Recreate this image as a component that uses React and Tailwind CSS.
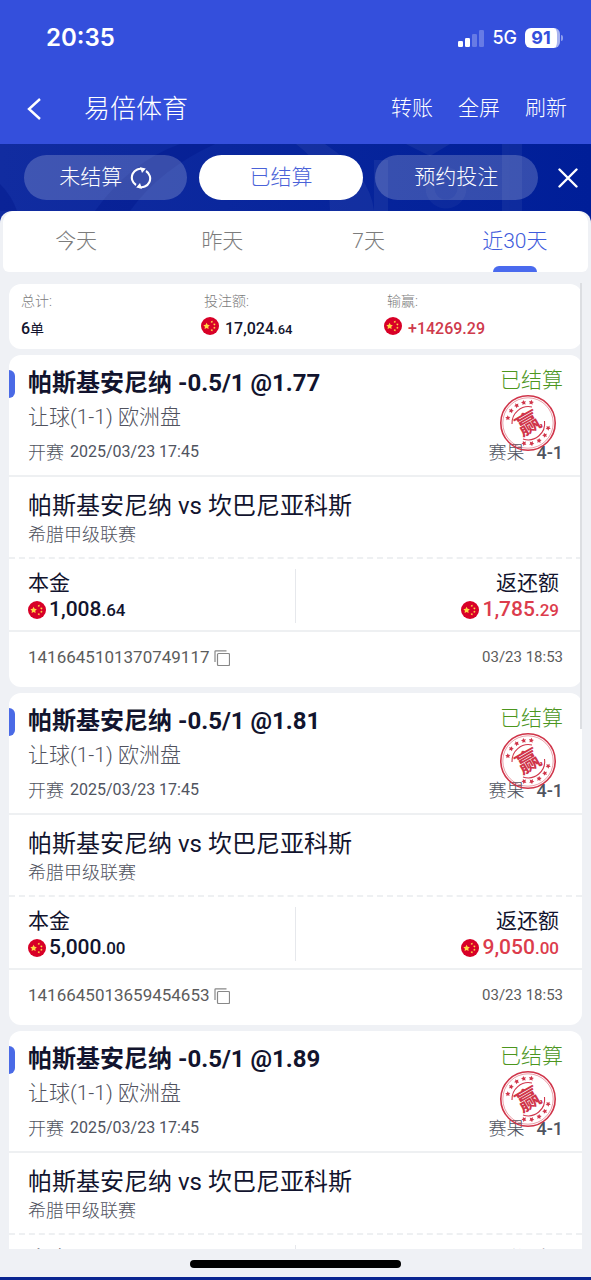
import React, { useState } from 'react';
import clsx from 'clsx';

const bets = [
  { id: '1416645101370749117', odds: '1.77', stake: ['1,008', '.64'], payout: ['1,785', '.29'] },
  { id: '1416645013659454653', odds: '1.81', stake: ['5,000', '.00'], payout: ['9,050', '.00'] },
  { id: '1416645013659454654', odds: '1.89', stake: ['5,000', '.00'], payout: ['9,450', '.00'] },
];

const ranges = ['今天', '昨天', '7天', '近30天'];

const STAR = 'M0 -1L0.29 -0.4L0.95 -0.31L0.48 0.15L0.59 0.81L0 0.5L-0.59 0.81L-0.48 0.15L-0.95 -0.31L-0.29 -0.4Z';

const Flag = () => (
  <svg className="size-[18px] shrink-0" viewBox="0 0 18 18" aria-hidden="true">
    <circle cx="9" cy="9" r="9" fill="#d80027" />
    <g fill="#ffda44">
      <path d={STAR} transform="translate(5.6 9.2) scale(3.4)" />
      <path d={STAR} transform="translate(10.8 4.8) rotate(20) scale(1.3)" />
      <path d={STAR} transform="translate(13.4 7.4) rotate(40) scale(1.3)" />
      <path d={STAR} transform="translate(13.4 10.8) scale(1.3)" />
      <path d={STAR} transform="translate(10.8 13.2) rotate(20) scale(1.3)" />
    </g>
  </svg>
);

const WinStamp = () => (
  <svg className="absolute right-[25px] top-[39px] size-[58px]" viewBox="0 0 58 58" role="img" aria-label="赢">
    <g fill="none" stroke="#d0354a">
      <circle cx="29" cy="29" r="27.2" strokeWidth="1.6" />
      <circle cx="29" cy="29" r="25.2" strokeWidth="0.8" opacity="0.6" />
      <path d="M13 30A16.5 16.5 0 0 1 33 13" strokeWidth="1.1" />
      <path d="M45.5 27A16.5 16.5 0 0 1 24 45" strokeWidth="1.1" />
    </g>
    <g fill="#d0354a">
      {[-76, -54, -33, -12, 9, 104, 126, 148, 170, 191].map((deg) => (
        <path key={deg} d={STAR} transform={`rotate(${deg} 29 29) translate(29 8.2) scale(2.7)`} />
      ))}
      <text x="29" y="38" textAnchor="middle" fontSize="24" fontWeight="700" transform="rotate(-30 29 29)">
        赢
      </text>
    </g>
  </svg>
);

const StatusBar = () => (
  <div className="flex h-[76px] items-center justify-between pl-[46px] pr-7 font-['Inter','Noto_Sans_CJK_SC',sans-serif]">
    <span className="text-2xl font-semibold">20:35</span>
    <div className="flex items-center gap-2">
      <svg className="h-[17px] w-[26px]" viewBox="0 0 26 17" fill="#fff" aria-hidden="true">
        <rect x="0" y="11" width="5" height="6" rx="1.2" />
        <rect x="7" y="8" width="5" height="9" rx="1.2" />
        <rect x="14" y="4" width="5" height="13" rx="1.2" opacity="0.25" />
        <rect x="21" y="0" width="5" height="17" rx="1.2" opacity="0.25" />
      </svg>
      <span className="text-lg font-medium">5G</span>
      <div className="flex items-center gap-px">
        <span className="flex h-5 w-[35px] items-center justify-center rounded-md border-r-3 border-[#a8b4ef] bg-white text-lg font-bold text-[#344fdc]">
          91
        </span>
        <span className="h-1.5 w-0.5 rounded-r-full bg-[#8e9eec]" />
      </div>
    </div>
  </div>
);

const Header = () => (
  <header className="flex h-[68px] items-center px-6 pb-0.5 font-light">
    <button type="button" aria-label="返回" className="flex w-[60px]">
      <svg className="h-6 w-5" viewBox="0 0 20 24" fill="none" stroke="#fff" strokeWidth="2.4">
        <path d="M16 2L5 12L16 22" />
      </svg>
    </button>
    <h1 className="flex-1 text-[26px]">易倍体育</h1>
    <nav className="flex gap-[25px] text-[21px]">
      <button type="button">转账</button>
      <button type="button">全屏</button>
      <button type="button">刷新</button>
    </nav>
  </header>
);

const pill = 'relative flex h-[45px] flex-1 items-center justify-center gap-2 rounded-full text-[21px]';

const OrderTabs = () => (
  <div className="relative flex items-center gap-3 overflow-hidden bg-linear-to-r from-[#112ca0] to-[#001e98] pt-[11px] pb-[27px] pl-6 pr-[13px] font-light">
    <svg className="absolute left-0 top-0 h-[83px] w-[591px]" viewBox="0 0 591 83" aria-hidden="true">
      <g fill="#00178c" opacity="0.4">
        <path d="M95 67Q130 18 180 0H215Q160 25 130 67Z" />
        <path d="M0 40Q12 52 17 67H0Z" />
      </g>
      <g fill="#fff" opacity="0.05">
        <path d="M296 0H325Q370 30 374 67H330Q330 25 296 0Z" />
        <path d="M406 0H450L430 12Z" />
        <rect x="374" y="16" width="14" height="51" />
        <rect x="502" y="0" width="20" height="67" />
      </g>
      <circle cx="446" cy="44" r="16" fill="none" stroke="#fff" strokeWidth="9" opacity="0.04" />
    </svg>
    <button type="button" className={`${pill} bg-white/20`}>
      未结算
      <svg className="size-[22px]" viewBox="0 0 22 22" fill="none" stroke="#fff" strokeWidth="2.1" aria-hidden="true">
        <path d="M6 18A8.8 8.8 0 0 1 13.5 2.2" />
        <path d="M16 4A8.8 8.8 0 0 1 8.5 19.8" />
        <path d="M10 0.2L15.8 1.6L12 6ZM12 21.8L6.2 20.4L10 16Z" fill="#fff" stroke="none" />
      </svg>
    </button>
    <button type="button" className={`${pill} bg-white text-[#4a62d8]`}>已结算</button>
    <button type="button" className={`${pill} bg-white/20`}>预约投注</button>
    <button type="button" aria-label="关闭" className="relative ml-2">
      <svg className="size-5" viewBox="0 0 20 20" fill="none" stroke="#fff" strokeWidth="2.4" strokeLinecap="round">
        <path d="M1.5 1.5L18.5 18.5M18.5 1.5L1.5 18.5" />
      </svg>
    </button>
  </div>
);

const RangeTabs = () => {
  const [active, setActive] = useState('近30天');
  return (
    <div className="mx-[3px] grid grid-cols-4 rounded-t-xl rounded-b-md bg-white">
      {ranges.map((r) => (
        <button
          key={r}
          type="button"
          onClick={() => setActive(r)}
          className={clsx(
            'relative h-[61px] text-[21px] font-light',
            r === active ? 'text-[#3f5cdc]' : 'text-[#7c7c7c]'
          )}
        >
          {r}
          {r === active && (
            <span className="absolute bottom-0 left-1/2 h-1.5 w-11 -translate-x-1/2 rounded-t-md bg-[#4a6aee]" />
          )}
        </button>
      ))}
    </div>
  );
};

const Summary = () => (
  <section className="grid shrink-0 grid-cols-3 rounded-xl bg-white px-3 pt-[7px] pb-2 text-[#12142e]">
    <div>
      <p className="text-sm leading-5 font-light text-[#7c7c7c]">总计:</p>
      <p className="flex h-[30px] items-center pt-1.5 text-base font-medium">
        6<span className="text-sm font-normal">单</span>
      </p>
    </div>
    <div>
      <p className="text-sm leading-5 font-light text-[#7c7c7c]">投注额:</p>
      <div className="-ml-[3px] flex h-[30px] items-center gap-1.5">
        <Flag />
        <p className="pt-1.5 text-base font-medium">17,024<span className="text-[13px]">.64</span></p>
      </div>
    </div>
    <div>
      <p className="text-sm leading-5 font-light text-[#7c7c7c]">输赢:</p>
      <div className="-ml-[3px] flex h-[30px] items-center gap-1.5 text-[#cf3a4c]">
        <Flag />
        <p className="pt-1.5 text-base font-medium">+14269.29</p>
      </div>
    </div>
  </section>
);

const Amount = ({ value }) => (
  <div className="flex h-[26px] items-center gap-[3px]">
    <Flag />
    <p className="text-[21px] leading-[26px] font-medium">
      {value[0]}<span className="text-[17px]">{value[1]}</span>
    </p>
  </div>
);

const BetCard = ({ bet }) => (
  <article className="relative shrink-0 rounded-xl bg-white text-[#12142e]">
    <span className="absolute left-0 top-[15px] h-7 w-1.5 rounded-r-md bg-[#4a6ae6]" />
    <div className="h-[122px] border-b-2 border-[#eef0f2] px-[19px] pt-[9px]">
      <div className="flex h-[37px] items-center justify-between">
        <h2 className="text-2xl font-bold">帕斯基安尼纳 -0.5/1 @{bet.odds}</h2>
        <span className="pb-1 text-[21px] font-light text-[#4c961e]">已结算</span>
      </div>
      <p className="h-[33px] text-[21px] leading-[33px] font-light text-[#50525e]">让球(1-1) 欧洲盘</p>
      <div className="flex h-9 items-center justify-between text-base text-[#50545f]">
        <p className="flex items-center gap-1.5"><span className="text-[18px] font-light">开赛</span>2025/03/23 17:45</p>
        <p className="flex items-center gap-3 text-[18px] font-medium"><span className="font-light">赛果</span>4-1</p>
      </div>
      <WinStamp />
    </div>
    <div className="h-[82px] border-b-2 border-dashed border-[#eef0f2] px-[19px] pt-3">
      <h3 className="text-2xl leading-[34px] font-normal">帕斯基安尼纳 vs 坎巴尼亚科斯</h3>
      <p className="text-[18px] leading-6 font-light text-[#50525e]">希腊甲级联赛</p>
    </div>
    <div className="grid h-[73px] grid-cols-2 content-center border-b-2 border-[#eef0f2] px-[19px] pt-0.5">
      <div className="border-r border-[#e6e8ec]">
        <p className="text-[21px] leading-7">本金</p>
        <Amount value={bet.stake} />
      </div>
      <div className="flex flex-col items-end pr-1">
        <p className="text-[21px] leading-7">返还额</p>
        <div className="text-[#dc3c4c]"><Amount value={bet.payout} /></div>
      </div>
    </div>
    <div className="flex h-[55px] items-center justify-between px-[19px] pb-1 text-[#5c5c5c]">
      <div className="flex items-center gap-1 text-[17px]">
        {bet.id}
        <button type="button" aria-label="复制">
          <svg className="size-4" viewBox="0 0 16 16" fill="none" stroke="#888" strokeWidth="1.2">
            <rect x="3.5" y="3.5" width="12" height="12" rx="1" />
            <path d="M1 12V1.5Q1 0.8 1.7 0.8H12.5" />
          </svg>
        </button>
      </div>
      <time className="text-[15px]">03/23 18:53</time>
    </div>
  </article>
);

export default function App() {
  return (
    <div className="flex h-screen flex-col overflow-hidden bg-[#344fdc] font-['Roboto','Noto_Sans_CJK_SC',sans-serif] text-white">
      <StatusBar />
      <Header />
      <OrderTabs />
      <main className="relative -mt-4 flex min-h-0 flex-1 flex-col rounded-t-xl border-b-[3px] border-[#0a2590] bg-[#eff1f5]">
        <RangeTabs />
        <div className="mt-3 flex min-h-0 flex-1 flex-col gap-1.5 overflow-y-auto px-[9px] [scrollbar-width:none]">
          <Summary />
          {bets.map((bet) => (
            <BetCard key={bet.id} bet={bet} />
          ))}
        </div>
        <div className="absolute right-[9px] top-[72px] h-[446px] w-0.5 bg-[#dcdee2]" />
        <div className="flex h-7 shrink-0 items-center justify-center pt-0.5">
          <div className="h-2 w-[211px] rounded-full bg-black" />
        </div>
      </main>
    </div>
  );
}
